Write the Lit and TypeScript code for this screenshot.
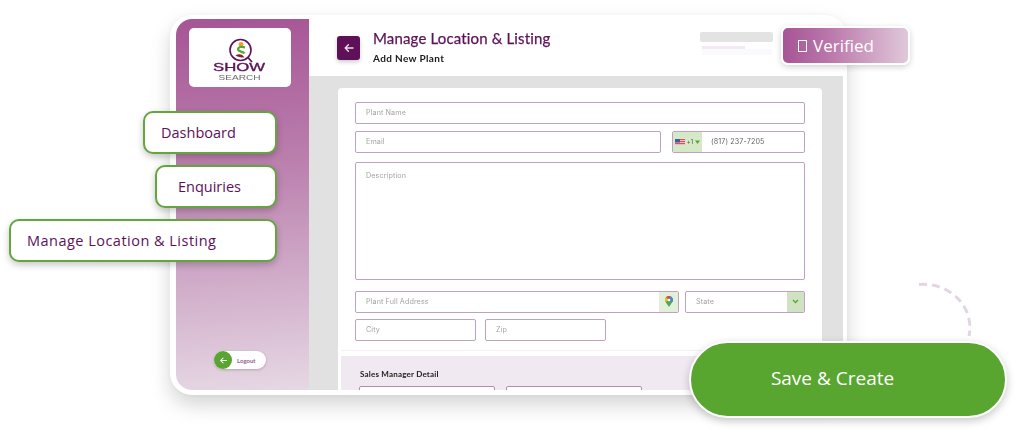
import { LitElement, html, css, svg } from "lit";
import { customElement } from "lit/decorators.js";

const arrow = (c: string, s: number) => html`<svg width=${s} height=${s} viewBox="0 0 12 12" fill="none" stroke=${c} stroke-width="1.4" stroke-linecap="round" stroke-linejoin="round"><path d="M10 6H2.2M5.4 2.8 2.2 6l3.2 3.2"/></svg>`;

const logo = svg`<svg width="62" height="46" viewBox="0 0 62 46">
  <circle cx="31.5" cy="15" r="10.5" fill="none" stroke="#5e1159" stroke-width="1.6"/>
  <path d="M39 22.5 43 27" stroke="#5e1159" stroke-width="1.8"/>
  <circle cx="32" cy="9.5" r="2.4" fill="#ee9f2d"/>
  <path d="M36 12.5c-3-1.2-7-.6-7 1.800 0 2.400 5 2 6.500 4.200" fill="none" stroke="#58a630" stroke-width="2.2"/>
  <path d="M26.500 20.500c3-2.400 7-1.600 9 2-3 .2-6-.4-9-2z" fill="#8a1c2c"/>
  <text x="30" y="35.5" text-anchor="middle" font-family="'Liberation Sans',sans-serif" font-size="11" stroke="#5e1159" stroke-width="0.35" fill="#5e1159" textLength="52" lengthAdjust="spacingAndGlyphs">SHOW</text>
  <text x="30.5" y="44.5" text-anchor="middle" font-family="'Liberation Sans',sans-serif" font-size="7.5" fill="#6a6a6a" textLength="42" lengthAdjust="spacingAndGlyphs">SEARCH</text>
</svg>`;

@customElement("app-root")
export class AppRoot extends LitElement {
  static styles = css`
    :host {
      display: block;
      position: relative;
      width: 1016px;
      height: 432px;
      overflow: hidden;
      background: #fff;
      font-family: "Open Sans", sans-serif;
    }
    .stage {
      padding: 15px 0 0 170px;
    }
    .frame {
      width: 677px;
      height: 380px;
      box-sizing: border-box;
      padding: 4px 4px 5px 6px;
      background: #fff;
      border-radius: 22px;
      box-shadow: 0 10px 20px rgba(0, 0, 0, 0.17), 0 0 5px rgba(0, 0, 0, 0.03);
      display: flex;
    }
    .sidebar {
      width: 133px;
      flex: none;
      box-sizing: border-box;
      padding: 9px 0 21px 13px;
      display: flex;
      flex-direction: column;
      justify-content: space-between;
      border-radius: 16px 0 0 16px;
      background: linear-gradient(176deg, #a65595 0%, #bb80ae 40%, #e6d8e4 100%);
    }
    .logo {
      width: 102px;
      height: 59px;
      background: #fff;
      border-radius: 5px;
      display: flex;
      align-items: center;
      justify-content: center;
      filter: blur(0.35px);
    }
    .logout {
      align-self: flex-start;
      margin-left: 25px;
      width: 52px;
      height: 18px;
      border-radius: 9px;
      background: #fff;
      box-shadow: 0 1px 3px rgba(0, 0, 0, 0.2);
      display: flex;
      align-items: center;
      gap: 5px;
      font: 700 6px Lato, sans-serif;
      color: #9a5a92;
    }
    .logout i {
      width: 18px;
      height: 18px;
      border-radius: 50%;
      background: #58a630;
      display: flex;
      align-items: center;
      justify-content: center;
    }
    .main {
      flex: 1;
      min-width: 0;
      display: flex;
      flex-direction: column;
    }
    .head {
      height: 57px;
      flex: none;
      box-sizing: border-box;
      padding: 9px 70px 0 28px;
      display: flex;
      gap: 13px;
      filter: blur(0.25px);
    }
    .back {
      width: 23px;
      height: 24px;
      margin-top: 8px;
      flex: none;
      border-radius: 3px;
      background: #5e1159;
      box-shadow: 0 2px 4px rgba(0, 0, 0, 0.2);
      display: flex;
      align-items: center;
      justify-content: center;
    }
    .titles {
      flex: 1;
    }
    h1 {
      margin: 0;
      font: 400 15px/20px Lato, sans-serif;
      letter-spacing: 0.15px;
      -webkit-text-stroke: 0.25px #5e1159;
      color: #5e1159;
    }
    h2 {
      margin: 3px 0 0;
      font: 700 10px/14px Lato, sans-serif;
      letter-spacing: 0.35px;
      color: #1c1c1c;
    }
    .skeleton {
      width: 73px;
      padding-top: 4px;
    }
    .skeleton b {
      display: block;
      height: 10px;
      border-radius: 2px;
      background: #e3e3e3;
    }
    .skeleton u {
      display: block;
      width: 43px;
      height: 3px;
      margin: 4px 0 0 2px;
      background: #f3e9f4;
    }
    .skeleton s {
      display: block;
      width: 70px;
      height: 6px;
      margin-left: 2px;
      background: #fafafc;
    }
    .content {
      flex: 1;
      min-height: 0;
      box-sizing: border-box;
      padding: 12px 21px 0 29px;
      background: #e1e1e1;
    }
    .card {
      height: 100%;
      box-sizing: border-box;
      padding: 14px 17px 0;
      background: #fff;
      border-radius: 4px 4px 0 0;
      overflow: hidden;
      filter: blur(0.25px);
    }
    .row {
      display: flex;
      gap: 11px;
    }
    .m7 {
      margin-bottom: 7px;
    }
    .m9 {
      margin-bottom: 9px;
    }
    .m11 {
      margin-bottom: 11px;
    }
    .m6 {
      margin-bottom: 6px;
    }
    .field {
      height: 22px;
      flex: 1;
      min-width: 0;
      box-sizing: border-box;
      padding-bottom: 1px;
      border: 1px solid #c39fc0;
      border-radius: 2px;
      display: flex;
      align-items: center;
      overflow: hidden;
      font: 400 7.2px Inter, sans-serif;
      letter-spacing: 0.1px;
      color: #a4a4a4;
    }
    .field span {
      flex: 1;
      padding-left: 10px;
    }
    .addon {
      height: 21px;
      background: #dcebd2;
      display: flex;
      align-items: center;
      justify-content: center;
      flex: none;
    }
    .pin {
      width: 19px;
      background: #e2efd9;
    }
    .caret {
      width: 17px;
      background: #cfe3c2;
    }
    .phone {
      flex: none;
      width: 133px;
      color: #666;
    }
    .phone .addon {
      width: 29px;
      gap: 2px;
      background: #d5e8c8;
      font-size: 6px;
      color: #555;
    }
    .phone span {
      padding-left: 9px;
    }
    .desc {
      height: 118px;
      align-items: flex-start;
      padding-top: 8px;
    }
    .address {
      flex: none;
      width: 324px;
    }
    .state {
      flex: none;
      width: 120px;
    }
    .small {
      flex: none;
      width: 121px;
    }
    .gap6 {
      gap: 6px;
    }
    .gap9 {
      gap: 9px;
    }
    .sales {
      margin: 15px -17px 0 -14px;
      box-shadow: 0 -5px 0 #fff, 0 -6px 0 #f2f2f2;
      padding: 12px 18px 0;
      height: 60px;
      background: #f1e9f1;
    }
    .sales h3 {
      margin: 0 0 6px 1px;
      font: 700 8px/12px Lato, sans-serif;
      letter-spacing: 0.2px;
      color: #222;
    }
    .sales .field {
      flex: none;
      width: 136px;
      background: #fff;
      border-color: #b58cb0;
    }
    .pill {
      position: absolute;
      right: 739px;
      height: 43px;
      box-sizing: border-box;
      background: #fff;
      border: 2px solid #64a53f;
      border-radius: 10px;
      box-shadow: 0 3px 7px rgba(0, 0, 0, 0.22);
      font-size: 14.5px;
      line-height: 39px;
      color: #5e1159;
    }
    .dash {
      top: 111px;
      width: 134px;
      padding-left: 16px;
    }
    .enq {
      top: 165px;
      width: 122px;
      padding-left: 21px;
    }
    .loc {
      top: 219px;
      width: 268px;
      padding-left: 16px;
      letter-spacing: 0.48px;
    }
    .verified {
      position: absolute;
      left: 781px;
      top: 26px;
      width: 129px;
      height: 39px;
      box-sizing: border-box;
      padding-left: 15px;
      display: flex;
      align-items: center;
      gap: 6px;
      border: 2px solid #fff;
      border-radius: 7px;
      background: linear-gradient(90deg, #a65595 0%, #b975a9 35%, #e0c8da 100%);
      box-shadow: 0 2px 6px rgba(0, 0, 0, 0.18);
      font-size: 17px;
      color: #fff;
    }
    .verified i {
      width: 9px;
      height: 12px;
      border: 1.2px solid #fff;
      box-sizing: border-box;
    }
    .save {
      position: absolute;
      left: 689px;
      top: 341px;
      width: 318px;
      height: 77px;
      box-sizing: border-box;
      display: flex;
      align-items: center;
      justify-content: center;
      padding: 0 31px 3px 0;
      border: 2px solid #fff;
      border-radius: 39px;
      background: #58a630;
      box-shadow: 0 3px 9px rgba(0, 0, 0, 0.22);
      font-size: 19px;
      color: #fff;
    }
    .arc {
      position: absolute;
      left: 915px;
      top: 280px;
    }
  `;

  render() {
    return html`
      <div class="stage">
        <div class="frame">
          <aside class="sidebar">
            <div class="logo">${logo}</div>
            <div class="logout">
              <i>${arrow("#fff", 9)}</i>
              Logout
            </div>
          </aside>
          <div class="main">
            <header class="head">
              <div class="back">${arrow("#e9dbe8", 12)}</div>
              <div class="titles">
                <h1>Manage Location &amp; Listing</h1>
                <h2>Add New Plant</h2>
              </div>
              <div class="skeleton"><b></b><u></u><s></s></div>
            </header>
            <div class="content">
              <div class="card">
                <div class="row m7"><div class="field"><span>Plant Name</span></div></div>
                <div class="row m9">
                  <div class="field"><span>Email</span></div>
                  <div class="field phone">
                    <div class="addon">
                      <svg width="10" height="6" viewBox="0 0 10 6">
                        <rect width="10" height="6" fill="#d8525c"/>
                        <path d="M0 1.5h10M0 3.5h10M0 5.5h10" stroke="#f0d8dc" stroke-width=".8"/>
                        <rect width="5" height="3.5" fill="#3f5c9e"/>
                      </svg>
                      +1
                      <svg width="5" height="4" viewBox="0 0 5 4"><path d="M0 .5h5L2.5 4z" fill="#58a630"/></svg>
                    </div>
                    <span>(817) 237-7205</span>
                  </div>
                </div>
                <div class="row m11"><div class="field desc"><span>Description</span></div></div>
                <div class="row gap6 m6">
                  <div class="field address">
                    <span>Plant Full Address</span>
                    <div class="addon pin">
                      <svg width="8" height="11" viewBox="0 0 8 11">
                        <path d="M4 0a4 4 0 0 1 3.4 6.100L4 11 .6 6.100A4 4 0 0 1 4 0z" fill="#4da85a"/>
                        <path d="M.6 6.100A4 4 0 0 1 1.2 1.100L4 4z" fill="#f0b62e"/>
                        <path d="M1.2 1.100A4 4 0 0 1 4 0l1.500.3L4 4z" fill="#dd4b3e"/>
                        <path d="M5.500.3A4 4 0 0 1 7.4 6.100L4 4z" fill="#4a86e0"/>
                        <circle cx="4" cy="4" r="1.3" fill="#fff"/>
                      </svg>
                    </div>
                  </div>
                  <div class="field state">
                    <span>State</span>
                    <div class="addon caret">
                      <svg width="7" height="5" viewBox="0 0 7 5" fill="none" stroke="#58a630" stroke-width="1.3"><path d="M1 1l2.500 2.500L6 1"/></svg>
                    </div>
                  </div>
                </div>
                <div class="row gap9">
                  <div class="field small"><span>City</span></div>
                  <div class="field small"><span>Zip</span></div>
                </div>
                <section class="sales">
                  <h3>Sales Manager Detail</h3>
                  <div class="row">
                    <div class="field"></div>
                    <div class="field"></div>
                  </div>
                </section>
              </div>
            </div>
          </div>
        </div>
      </div>
      <div class="pill dash">Dashboard</div>
      <div class="pill enq">Enquiries</div>
      <div class="pill loc">Manage Location &amp; Listing</div>
      <div class="verified"><i></i>Verified</div>
      <svg class="arc" width="60" height="60" viewBox="0 0 60 60" fill="none">
        <path d="M4 4.5C34 2 60 26 54 56" stroke="#e3d6e3" stroke-width="3" stroke-dasharray="8 5"/>
      </svg>
      <div class="save">Save &amp; Create</div>
    `;
  }
}
